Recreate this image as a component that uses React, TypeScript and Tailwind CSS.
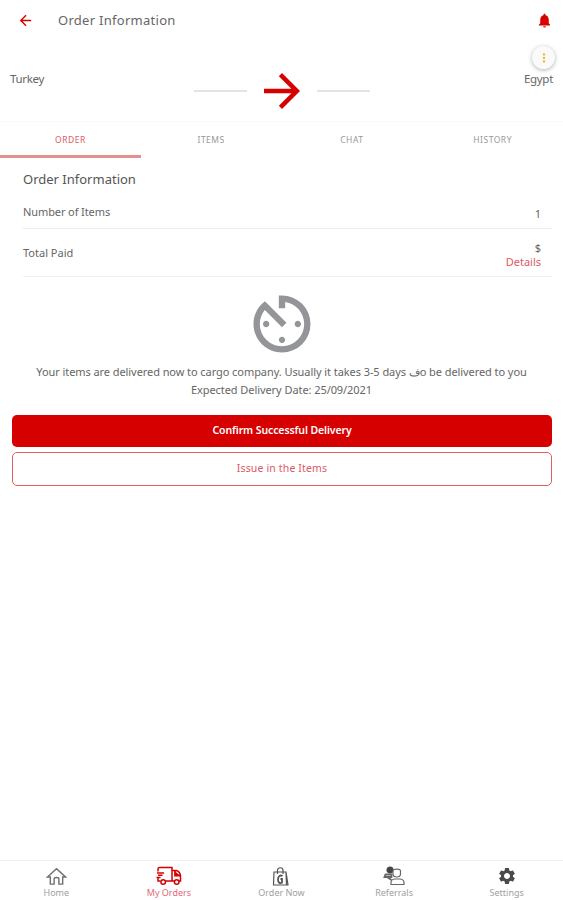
import React from 'react';
import { MdArrowBack, MdArrowForward, MdAvTimer, MdMoreVert, MdNotifications, MdSettings } from 'react-icons/md';

const tabs = ['ORDER', 'ITEMS', 'CHAT', 'HISTORY'];

const HomeIcon = () => (
  <svg width="21" height="19" viewBox="0 0 22 20" fill="none" stroke="#707070" strokeWidth="1.5">
    <path d="M1.5 10.5 11 1.7l9.5 8.8h-3V18h-4v-5.5c0-1-1-1.5-2.5-1.5s-2.5.5-2.5 1.5V18h-4v-7.5z" />
  </svg>
);

const TruckIcon = () => (
  <svg width="27" height="20" viewBox="0 0 27 20" fill="none" stroke="#d70000" strokeWidth="1.5">
    <path d="M3 5.500V3q0-1.500 1.500-1.500H17V15h-6M5.500 15H3v-3M17 4.500h4.500q4 1.500 4 6V15H24M19.500 15H17" />
    <path d="M20 5v4.500h5M20.500 7l3 2.500" strokeWidth="1.800" />
    <path d="M2 7h7M3 9.200h4.500M1.500 11.500h4" strokeWidth="1.500" />
    <circle cx="8.200" cy="16" r="2.300" fill="#fff" />
    <circle cx="21.700" cy="16" r="2.300" fill="#fff" />
  </svg>
);

const BagIcon = () => (
  <svg width="18" height="21" viewBox="0 0 18 21" fill="none" stroke="#555" strokeWidth="1.200">
    <path d="M2 6h12l2 13H1.500zM14 6l.5 13" />
    <path d="M5.500 8V4.500C5.500.8 11 .8 11 4.500V8" />
    <path d="M10.500 10C8 8.500 6 10.500 6 13.500s2 4.500 4 3v-3.500H8.500" strokeWidth="1.800" />
  </svg>
);

const ReferralsIcon = () => (
  <svg width="22" height="20" viewBox="0 0 22 20" fill="none" stroke="#666" strokeWidth="1.200">
    <circle cx="7" cy="4" r="3" fill="#444" stroke="#444" />
    <path d="M2.500 8.500h6v2.500H1.500zM4 11l4.500 3" strokeWidth="1.800" />
    <path d="M10 5c0-2.500 7.500-2.500 7.500 0v3c0 4-7.500 4-7.500 0z" fill="#fff" />
    <path d="M8 18.500v-2c0-2 2-3.500 4-3.500h4.500c2.500 0 4.500 1.500 4.500 3.500v2z" fill="#fff" />
  </svg>
);

const navItems = [
  { name: 'Home', icon: <HomeIcon />, color: 'text-[#a0a0a0]' },
  { name: 'My Orders', icon: <TruckIcon />, color: 'text-[#e06b7b]' },
  { name: 'Order Now', icon: <BagIcon />, color: 'text-[#a0a0a0]' },
  { name: 'Referrals', icon: <ReferralsIcon />, color: 'text-[#a0a0a0]' },
  { name: 'Settings', icon: <MdSettings size={20} color="#4a4a4a" />, color: 'text-[#a0a0a0]' },
];

const App: React.FC = () => {
  return (
    <div className="relative flex h-[900px] flex-col bg-white font-['Noto_Sans',sans-serif] text-[#666]">
      <header className="flex h-10 items-center pl-[17px] pr-[10px]">
        <MdArrowBack size={17} color="#d70000" />
        <h1 className="ml-[24px] flex-1 pt-px text-[13px] tracking-[0.28px]">Order Information</h1>
        <MdNotifications size={17} color="#d70000" />
      </header>

      <button className="absolute right-2 top-[46px] flex h-[23px] w-[23px] items-center justify-center rounded-full bg-[#fafafa] shadow-[0_1px_4px_rgba(0,0,0,0.3)]">
        <MdMoreVert size={14} color="#f5b52e" />
      </button>

      <div className="flex h-[81px] justify-between px-[10px] pt-[31px] text-[11.5px] leading-4 tracking-[-0.3px]">
        <span className="w-20">Turkey</span>
        <div className="flex h-10 items-center gap-[8px]">
          <div className="h-0.5 w-[53px] bg-[#e4e4e4]" />
          <MdArrowForward size={54} color="#d70000" />
          <div className="h-0.5 w-[53px] bg-[#e4e4e4]" />
        </div>
        <span className="w-20 text-right">Egypt</span>
      </div>

      <div className="grid h-[37px] grid-cols-4 border-t border-[#fafafa] text-[8.5px] tracking-[0.5px]">
        {tabs.map((tab, i) => (
          <div
            key={tab}
            className={
              i === 0
                ? 'flex items-center justify-center border-b-[3px] border-[#e58f8f] pt-[3px] text-[#dc5967]'
                : 'flex items-center justify-center border-b-[3px] border-transparent pt-[3px] text-[#999]'
            }
          >
            {tab}
          </div>
        ))}
      </div>

      <section className="pl-[23px] pr-[11px]">
        <h2 className="pt-[11px] text-[13px] leading-5 text-[#555]">Order Information</h2>
        <div className="flex h-10 items-start justify-between border-b border-[#ececec] pr-[11px] pt-[15px] text-[11px] leading-4">
          <span className="-tracking-[0.1px]">Number of Items</span>
          <span className="pt-0.5">1</span>
        </div>
        <div className="flex h-12 items-center justify-between border-b border-[#f0f0f0] pr-[11px] text-[11px] leading-[14px]">
          <span>Total Paid</span>
          <div className="pt-1 text-right">
            <div>$</div>
            <div className="text-[#dc5967]">Details</div>
          </div>
        </div>
      </section>

      <div className="flex flex-col items-center pt-[9px]">
        <MdAvTimer size={76} color="#939598" />
        <p className="pt-px text-center text-[11px] leading-[18px] tracking-[-0.07px]">
          Your items are delivered now to cargo company. Usually it takes 3-5 days فo be delivered to you
          <br />
          Expected Delivery Date: 25/09/2021
        </p>
      </div>

      <div className="flex flex-col gap-[5px] pl-3 pr-[11px] pt-4">
        <button className="h-8 rounded-[5px] bg-[#d70000] text-[10.5px] font-semibold tracking-[-0.1px] text-white">
          Confirm Successful Delivery
        </button>
        <button className="h-[34px] rounded-[5px] border border-[#e06060] text-[10.5px] tracking-[0.15px] text-[#dc5967]">
          Issue in the Items
        </button>
      </div>

      <nav className="mt-auto grid h-10 grid-cols-5 border-t border-[#f0f0f0]">
        {navItems.map((item) => (
          <div key={item.name} className="flex flex-col items-center pt-[5px]">
            <div className="flex h-5 items-center">{item.icon}</div>
            <span className={`text-[9px] leading-[13px] ${item.color}`}>{item.name}</span>
          </div>
        ))}
      </nav>
    </div>
  );
};

export default App;
